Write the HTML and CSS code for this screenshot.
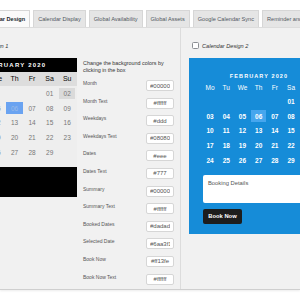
FILE: index.html
```html
<!DOCTYPE html>
<html lang="en">
<head>
  <meta charset="UTF-8" />
  <meta name="viewport" content="width=device-width, initial-scale=1.0"/>
  <title>Calendar Design</title>
  <link rel="stylesheet" href="styles.css">
</head>
<body>

  <div class="tabs">
    <span class="tab active">Calendar Design</span>
    <span class="tab">Calendar Display</span>
    <span class="tab">Global Availability</span>
    <span class="tab">Global Assets</span>
    <span class="tab">Google Calendar Sync</span>
    <span class="tab">Reminder and Notifications</span>
  </div>

  <div class="panel">

    <div class="col-left">
      <label class="pick"><input type="checkbox" class="check"> Calendar Design 1</label>
      <div class="cal-light">
        <div class="cal-month">February 2020</div>
        <div class="cal-days">
          <span>Mo</span><span>Tu</span><span>We</span><span>Th</span><span>Fr</span><span>Sa</span><span>Su</span>
        </div>
        <div class="cal-dates">
          <span></span><span></span><span></span><span></span><span></span><span>01</span><span class="booked">02</span>
          <span>03</span><span>04</span><span>05</span><span class="sel">06</span><span>07</span><span>08</span><span>09</span>
          <span>10</span><span>11</span><span>12</span><span>13</span><span>14</span><span>15</span><span>16</span>
          <span>17</span><span>18</span><span>19</span><span>20</span><span>21</span><span>22</span><span>23</span>
          <span>24</span><span>25</span><span>26</span><span>27</span><span>28</span><span>29</span><span></span>
        </div>
        <div class="cal-summary"></div>
      </div>
    </div>

    <div class="col-colors">
      <p class="hint">Change the background colors by clicking in the box</p>
      <div class="color-row"><span>Month</span><input type="text" value="#000000"></div>
      <div class="color-row"><span>Month Text</span><input type="text" value="#ffffff"></div>
      <div class="color-row"><span>Weekdays</span><input type="text" value="#ddd"></div>
      <div class="color-row"><span>Weekdays Text</span><input type="text" value="#080808"></div>
      <div class="color-row"><span>Dates</span><input type="text" value="#eee"></div>
      <div class="color-row"><span>Dates Text</span><input type="text" value="#777"></div>
      <div class="color-row"><span>Summary</span><input type="text" value="#000000"></div>
      <div class="color-row"><span>Summary Text</span><input type="text" value="#ffffff"></div>
      <div class="color-row"><span>Booked Dates</span><input type="text" value="#dadada"></div>
      <div class="color-row"><span>Selected Date</span><input type="text" value="#6aa3f1"></div>
      <div class="color-row"><span>Book Now</span><input type="text" value="#ff13fe"></div>
      <div class="color-row"><span>Book Now Text</span><input type="text" value="#ffffff"></div>
    </div>

    <div class="col-right">
      <label class="pick"><input type="checkbox" class="check"> Calendar Design 2</label>
      <div class="cal-blue">
        <div class="cal-month">February 2020</div>
        <div class="cal-days">
          <span>Mo</span><span>Tu</span><span>We</span><span>Th</span><span>Fr</span><span>Sa</span><span>Su</span>
        </div>
        <div class="cal-dates">
          <span></span><span></span><span></span><span></span><span></span><span>01</span><span class="booked">02</span>
          <span>03</span><span>04</span><span>05</span><span class="sel">06</span><span>07</span><span>08</span><span>09</span>
          <span>10</span><span>11</span><span>12</span><span>13</span><span>14</span><span>15</span><span>16</span>
          <span>17</span><span>18</span><span>19</span><span>20</span><span>21</span><span>22</span><span>23</span>
          <span>24</span><span>25</span><span>26</span><span>27</span><span>28</span><span>29</span><span></span>
        </div>
        <textarea class="details" placeholder="Booking Details"></textarea>
        <button type="button" class="book">Book Now</button>
      </div>
    </div>

  </div>

</body>
</html>
```

FILE: styles.css
```css
body {
  margin: 0;
  width: 300px;
  height: 300px;
  overflow: hidden;
  background: #fff;
  font-family: "Liberation Sans", Arial, sans-serif;
}

/* tabs */
.tabs {
  display: flex;
  gap: 3px;
  padding-top: 10px;
  margin-left: -24px;
  white-space: nowrap;
}

.tab {
  flex: none;
  height: 17px;
  line-height: 17px;
  padding: 0 4px;
  box-sizing: border-box;
  font-size: 5.6px;
  color: #50575e;
  background: #e5e5e5;
  border: 1px solid #d6d6d6;
  border-bottom: none;
}

.tab.active {
  font-weight: bold;
  background: #fafafa;
  color: #23282d;
}

/* panel */
.panel {
  display: flex;
  height: 263px;
  box-sizing: border-box;
  background: #f1f1f1;
  border-top: 1px solid #dcdcdc;
  border-bottom: 1px solid #cfcfcf;
  box-shadow: 0 1px 2px rgba(0, 0, 0, .08);
}

.pick {
  display: flex;
  align-items: center;
  gap: 3px;
  height: 9px;
  margin: 0 0 8px 3px;
  font-size: 5.6px;
  font-style: italic;
  color: #333;
  white-space: nowrap;
}

.check {
  appearance: none;
  width: 7px;
  height: 7px;
  margin: 0;
  box-sizing: border-box;
  border: 1px solid #8c8f94;
  border-radius: 1.5px;
  background: #fff;
}

.col-left {
  flex: none;
  width: 125px;
  margin-left: -48px;
  padding-top: 13px;
}

.col-left .pick {
  margin-left: 0;
}

.col-colors {
  flex: none;
  width: 101px;
  margin-left: 3px;
  padding: 32px 6px 0 3px;
  box-sizing: border-box;
  border-right: 1px solid #dcdcdc;
}

.col-right {
  flex: none;
  padding: 13px 0 0 8px;
}

/* calendars */
.cal-month {
  text-align: center;
  text-transform: uppercase;
  font-weight: bold;
  color: #fff;
}

.cal-days, .cal-dates {
  display: grid;
  text-align: center;
}

.cal-dates {
  grid-auto-rows: 14.7px;
}

.cal-dates span {
  display: flex;
  align-items: center;
  justify-content: center;
}

.cal-dates .sel, .cal-dates .booked {
  margin: 1.5px 0.5px;
}

.cal-light .cal-month {
  height: 14px;
  line-height: 14px;
  background: #000;
  font-size: 6px;
  letter-spacing: 1.2px;
}

.cal-light .cal-days {
  grid-template-columns: repeat(7, 1fr);
  padding: 0 1px;
  height: 14px;
  line-height: 14px;
  background: #ddd;
  font-size: 7px;
  color: #080808;
}

.cal-light .cal-dates {
  grid-template-columns: repeat(7, 1fr);
  padding: 0 1px 8px;
  background: #eee;
  font-size: 6.5px;
  color: #777;
}

.cal-light .booked { background: #dadada; }
.cal-light .sel { background: #6aa3f1; color: #9bbbe8; }

.cal-summary {
  height: 30px;
  background: #000;
}

.cal-blue {
  width: 114px;
  margin-top: 1px;
  padding: 13px 12px 10px 13px;
  background: #168cd8;
}

.cal-blue .cal-month {
  line-height: 10px;
  font-size: 5.5px;
  letter-spacing: 1.1px;
}

.cal-blue .cal-days {
  grid-template-columns: repeat(7, 16.2px);
  height: 13px;
  line-height: 13px;
  font-size: 6.5px;
  color: #fff;
}

.cal-blue .cal-dates {
  grid-template-columns: repeat(7, 16.2px);
  font-size: 6.5px;
  font-weight: bold;
  color: #fff;
}

.cal-blue .booked { background: #dadada; color: #fff; }
.cal-blue .sel { background: #46a6ee; }

.details {
  display: block;
  width: 120px;
  height: 28px;
  margin: 7.5px 0 0 1px;
  padding: 5px;
  box-sizing: border-box;
  border: none;
  border-radius: 2px;
  resize: none;
  font-family: inherit;
  font-size: 5.8px;
  background: #fff;
}

.details::placeholder {
  color: #555;
}

.book {
  display: block;
  width: 39px;
  height: 15px;
  margin: 6px 0 0 1px;
  padding: 0;
  border: none;
  border-radius: 2px;
  background: #1d1d1d;
  color: #fff;
  font-family: inherit;
  font-size: 5.8px;
  font-weight: bold;
}

/* colour inputs */
.hint {
  margin: 0 0 7px;
  font-size: 5.4px;
  line-height: 6.5px;
  color: #333;
}

.color-row {
  display: flex;
  align-items: flex-start;
  justify-content: space-between;
  height: 17.6px;
}

.color-row span {
  font-size: 5px;
  line-height: 7px;
  color: #555;
}

.color-row input {
  width: 28px;
  height: 11px;
  padding: 0 3px;
  box-sizing: border-box;
  border: 1px solid #d6d6d6;
  border-radius: 2px;
  background: #fff;
  font-family: inherit;
  font-size: 6px;
  text-align: center;
  color: #555;
}
```
